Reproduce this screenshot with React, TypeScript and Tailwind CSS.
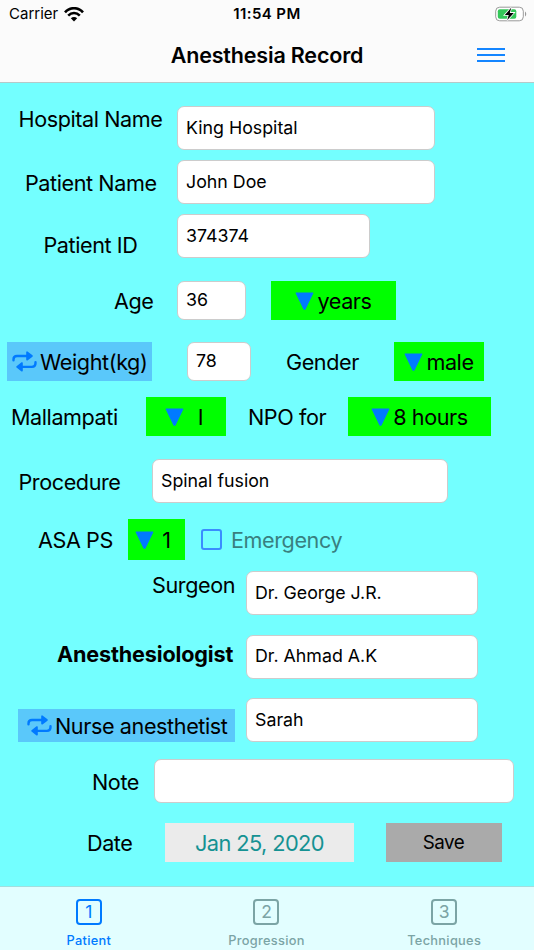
import type { ReactNode } from 'react';
import { clsx } from 'clsx';

const App = () => {
  return (
    <div className="flex h-[950px] w-[534px] flex-col overflow-hidden bg-[#73ffff] font-['Inter',sans-serif] text-black">
      <header className="h-[83px] border-b border-[#b5c9c9] bg-[#fbfbfb]">
        <StatusBar />
        <div className="flex h-[54px] items-center">
          <div className="w-[106px]" />
          <h1 className="flex-1 text-center text-[21.5px] font-semibold tracking-[-0.18px] whitespace-nowrap">
            Anesthesia Record
          </h1>
          <button className="flex w-[106px] flex-col gap-[4px] pl-[49px]" aria-label="Menu">
            <span className="h-[2px] w-[28px] bg-[#1485ff]" />
            <span className="h-[2px] w-[28px] bg-[#1485ff]" />
            <span className="h-[2px] w-[28px] bg-[#1485ff]" />
          </button>
        </div>
      </header>

      <main className="flex h-[803px] flex-col pt-[23px]">
        <Row className="h-[44px]">
          <Label className="w-[159px] pb-[18px] pl-[18.5px]">Hospital Name</Label>
          <Field className="ml-[18px] w-[258px]">King Hospital</Field>
        </Row>
        <Row className="mt-[10px] h-[44px]">
          <Label className="w-[152px] pt-px pl-[25px]">Patient Name</Label>
          <Field className="ml-[25px] w-[258px]">John Doe</Field>
        </Row>
        <Row className="mt-[10px] h-[44px]">
          <Label className="w-[134px] pt-[18px] pl-[43.5px]">Patient ID</Label>
          <Field className="ml-[43px] w-[193px]">374374</Field>
        </Row>
        <Row className="mt-[23px] h-[39px]">
          <Label className="w-[177px] pl-[114px]">Age</Label>
          <Field className="w-[69px] pb-px">36</Field>
          <Picker className="ml-[25px] w-[125px]">years</Picker>
        </Row>
        <Row className="mt-[22px] h-[39px]">
          <SwapButton className="ml-[7px] h-[39px] w-[145px] pl-[5px]">Weight(kg)</SwapButton>
          <Field className="ml-[35px] w-[64px] pb-px">78</Field>
          <Label className="ml-[35px] w-[108px]">Gender</Label>
          <Picker className="w-[90px]">male</Picker>
        </Row>
        <Row className="mt-[16px] h-[39px]">
          <Label className="w-[146px] pl-[11px]">Mallampati</Label>
          <Picker className="w-[80px] pr-[4px]" gap="gap-[14px]">I</Picker>
          <Label className="ml-[22px] w-[100px]">NPO for</Label>
          <Picker className="w-[143px]">8 hours</Picker>
        </Row>
        <Row className="mt-[23px] h-[44px]">
          <Label className="w-[152px] pt-px pl-[18.5px]">Procedure</Label>
          <Field className="w-[296px]">Spinal fusion</Field>
        </Row>
        <Row className="mt-[16px] h-[41px]">
          <Label className="w-[128px] pl-[38px]">ASA PS</Label>
          <Picker className="w-[57px] pr-[7px]" gap="gap-[8px]">1</Picker>
          <span className="ml-[16px] size-[21px] rounded-[3px] border-2 border-[#3a8dff]" />
          <Label className="ml-[9px] text-[#397f80]">Emergency</Label>
        </Row>
        <Row className="mt-[11px] h-[44px]">
          <Label className="w-[246px] pb-[17px] pl-[152px]">Surgeon</Label>
          <Field className="w-[232px]">Dr. George J.R.</Field>
        </Row>
        <Row className="mt-[20px] h-[44px]">
          <Label className="w-[246px] pb-[6px] pl-[57px] font-bold tracking-[-0.15px]">Anesthesiologist</Label>
          <Field className="w-[232px] pb-px">Dr. Ahmad A.K</Field>
        </Row>
        <Row className="mt-[19px] h-[44px]">
          <SwapButton className="mr-[11px] ml-[18px] h-[33px] w-[217px] self-end pl-[9px]">
            Nurse anesthetist
          </SwapButton>
          <Field className="w-[232px]">Sarah</Field>
        </Row>
        <Row className="mt-[17px] h-[44px]">
          <Label className="w-[154px] pt-px pl-[92px]">Note</Label>
          <Field className="w-[360px]" />
        </Row>
        <Row className="mt-[20px] h-[39px]">
          <Label className="w-[165px] pt-px pl-[87px]">Date</Label>
          <div className="flex h-full w-[189px] items-center justify-center bg-[#ebebeb] pt-px text-[21.8px] tracking-[-0.6px] text-[#159293]">
            Jan 25, 2020
          </div>
          <button className="ml-[32px] h-full w-[116px] bg-[#aaaaaa] pt-px pr-px text-[18.8px] tracking-[-0.5px]">
            Save
          </button>
        </Row>
      </main>

      <nav className="grid h-[64px] grid-cols-3 border-t border-[#a3dede] bg-[#e2feff] pr-px">
        <Tab number={1} active>Patient</Tab>
        <Tab number={2}>Progression</Tab>
        <Tab number={3}>Techniques</Tab>
      </nav>
    </div>
  );
};

const StatusBar = () => {
  return (
    <div className="flex h-[28px] items-center justify-between pr-[7px] pl-[9px]">
      <div className="flex w-[100px] items-center gap-[6px] text-[15px]">
        Carrier
        <svg className="h-[15px] w-[20px]" viewBox="0 0 20 15" fill="none" stroke="black">
          <path d="M1 5.3C6-.2 14-.2 19 5.3" strokeWidth="2.6" />
          <path d="M4.2 8.6C7.6 5 12.4 5 15.8 8.6" strokeWidth="2.5" />
          <path d="M10 14.4 6.8 11.2C8.6 9.5 11.4 9.5 13.2 11.2Z" fill="black" stroke="none" />
        </svg>
      </div>
      <span className="text-[15px] font-semibold tracking-[0.4px] whitespace-nowrap">11:54 PM</span>
      <div className="flex w-[102px] justify-end">
        <svg className="h-[16px] w-[32px]" viewBox="0 0 32 16">
          <rect x="0.7" y="1.2" width="27.6" height="13.6" rx="4" fill="white" stroke="#999" />
          <rect x="2.8" y="3.2" width="18.5" height="9.6" rx="2" fill="#34c759" />
          <path d="M30 5.5C31.6 6.3 31.6 9.7 30 10.5Z" fill="#999" />
          <path
            d="M16.2 1.8 9.8 8.9H13.7L12.2 14.2 18.8 6.9H14.8Z"
            fill="black"
            stroke="white"
            strokeWidth="1.6"
            paintOrder="stroke"
          />
        </svg>
      </div>
    </div>
  );
};

const Row = ({ className, children }: { className?: string; children: ReactNode }) => {
  return <div className={clsx('flex shrink-0 items-center tracking-[-0.42px]', className)}>{children}</div>;
};

const Label = ({ className, children }: { className?: string; children: ReactNode }) => {
  return (
    <span className={clsx('shrink-0 text-[21.6px] leading-[26px] whitespace-nowrap', className)}>
      {children}
    </span>
  );
};

const Field = ({ className, children }: { className?: string; children?: ReactNode }) => {
  return (
    <div
      className={clsx(
        'flex h-full shrink-0 items-center rounded-[7px] border border-[#cccccc] bg-white pl-[8px] text-[17.8px] tracking-normal whitespace-nowrap',
        className,
      )}
    >
      {children}
    </div>
  );
};

const Picker = ({
  className,
  gap = 'gap-[3px]',
  children,
}: {
  className?: string;
  gap?: string;
  children: ReactNode;
}) => {
  return (
    <button
      className={clsx(
        'flex h-full shrink-0 items-center justify-center bg-[#00ff00] text-[21.6px] tracking-[-0.42px] whitespace-nowrap',
        gap,
        className,
      )}
    >
      <svg className="h-[18px] w-[19px] shrink-0" viewBox="0 0 19 18">
        <path
          d="M1.2 1H17.8L10.2 16.8Q9.5 17.6 8.8 16.8Z"
          fill="#007aff"
          stroke="#007aff"
          strokeWidth="1.2"
          strokeLinejoin="round"
        />
      </svg>
      <span className="pt-px">{children}</span>
    </button>
  );
};

const SwapButton = ({ className, children }: { className?: string; children: ReactNode }) => {
  return (
    <button
      className={clsx(
        'flex shrink-0 items-center gap-[3px] bg-[#5ac8fa] text-[21.6px] tracking-[-0.4px] whitespace-nowrap',
        className,
      )}
    >
      <svg className="h-[21px] w-[25px] shrink-0" viewBox="0 0 25 21" fill="none">
        <path
          d="M1.5 9.3V8.4Q1.5 5 5 5H15M23.5 11.2V12.3Q23.5 15.9 20 15.9H10"
          stroke="#007aff"
          strokeWidth="2.4"
          strokeLinecap="round"
        />
        <path
          d="M15 1.2V8.8L20 5ZM10 12V19.8L5 15.9Z"
          fill="#007aff"
          stroke="#007aff"
          strokeWidth="1.6"
          strokeLinejoin="round"
        />
      </svg>
      <span className="pt-px">{children}</span>
    </button>
  );
};

const Tab = ({ number, active, children }: { number: number; active?: boolean; children: ReactNode }) => {
  return (
    <button
      className={clsx(
        'flex flex-col items-center pt-[12px]',
        active ? 'text-[#007aff]' : 'text-[#7ba4a5]',
      )}
    >
      <span className="flex size-[26px] items-center justify-center rounded-[4px] border-2 border-current text-[17.5px] leading-none">
        {number}
      </span>
      <span className="mt-[8px] text-[12.8px] leading-[16px] font-medium tracking-[0.3px]">{children}</span>
    </button>
  );
};

export default App;
